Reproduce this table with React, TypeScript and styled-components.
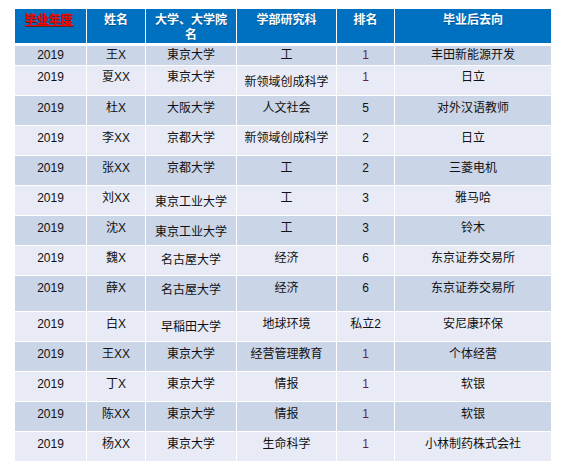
import React from "react";
import styled, { createGlobalStyle } from "styled-components";

const GlobalStyle = createGlobalStyle`
  html, body { margin: 0; padding: 0; background: #ffffff; }
  body {
    font-family: "Liberation Sans Narrow", "Liberation Sans", "Noto Sans CJK SC", sans-serif;
    -webkit-font-smoothing: antialiased;
  }
`;

const COLS = "71px 58px 90px 99px 57px 156px";

const Page = styled.div`
  padding: 9px 0 0 15px;
  width: 536px;
`;

const Table = styled.div`
  display: flex;
  flex-direction: column;
  gap: 1px;
  width: 536px;
`;

const HeaderRow = styled.div`
  display: grid;
  grid-template-columns: ${COLS};
  column-gap: 1px;
  height: 34px;
  margin-bottom: 2px;
`;

const HeadCell = styled.div`
  background: #0070c0;
  color: #ffffff;
  font-family: "Noto Sans CJK SC", sans-serif;
  font-weight: 700;
  font-size: 12px;
  line-height: 15px;
  text-align: center;
  padding: 2px 4px 0;
  text-shadow: 0.5px 0.5px 0.5px rgba(0, 0, 0, 0.25);
`;

const RedTitle = styled.span`
  color: #ff0000;
  text-decoration: underline;
  text-decoration-color: #ff0000;
  text-underline-offset: 1px;
  text-shadow: 1px 1px 0 #4a2a2a;
  margin-right: 4px;
`;

const BodyRow = styled.div<{ $h: number; $band: boolean }>`
  display: grid;
  grid-template-columns: ${COLS};
  column-gap: 1px;
  height: ${(p) => p.$h}px;
  --bg: ${(p) => (p.$band ? "#cbd5e8" : "#e8ebf5")};
`;

const Cell = styled.div<{ $pad: number; $tone?: string }>`
  background: var(--bg);
  color: ${(p) => p.$tone || "#111111"};
  font-size: 12px;
  line-height: 14px;
  text-align: center;
  white-space: nowrap;
  padding-top: ${(p) => p.$pad}px;
`;

type Row = {
  year: string;
  name: string;
  uni: string;
  dept: string;
  rank: string;
  dest: string;
  h: number;
  pad: number;
  uniPad?: number;
  deptPad?: number;
};

const rows: Row[] = [
  { year: "2019", name: "王X", uni: "東京大学", dept: "工", rank: "1", dest: "丰田新能源开发", h: 19, pad: 2 },
  { year: "2019", name: "夏XX", uni: "東京大学", dept: "新领域创成科学", rank: "1", dest: "日立", h: 29, pad: 4, deptPad: 9 },
  { year: "2019", name: "杜X", uni: "大阪大学", dept: "人文社会", rank: "5", dest: "对外汉语教师", h: 29, pad: 5 },
  { year: "2019", name: "李XX", uni: "京都大学", dept: "新领域创成科学", rank: "2", dest: "日立", h: 29, pad: 5 },
  { year: "2019", name: "张XX", uni: "京都大学", dept: "工", rank: "2", dest: "三菱电机", h: 29, pad: 5 },
  { year: "2019", name: "刘XX", uni: "東京工业大学", dept: "工", rank: "3", dest: "雅马哈", h: 29, pad: 5, uniPad: 8.5 },
  { year: "2019", name: "沈X", uni: "東京工业大学", dept: "工", rank: "3", dest: "铃木", h: 29, pad: 5, uniPad: 8.5 },
  { year: "2019", name: "魏X", uni: "名古屋大学", dept: "经济", rank: "6", dest: "东京证券交易所", h: 29, pad: 5, uniPad: 6.5 },
  { year: "2019", name: "薛X", uni: "名古屋大学", dept: "经济", rank: "6", dest: "东京证券交易所", h: 35, pad: 5, uniPad: 7 },
  { year: "2019", name: "白X", uni: "早稲田大学", dept: "地球环境", rank: "私立2", dest: "安尼康环保", h: 29, pad: 5, uniPad: 7.5, deptPad: 4.5 },
  { year: "2019", name: "王XX", uni: "東京大学", dept: "经营管理教育", rank: "1", dest: "个体经营", h: 29, pad: 5 },
  { year: "2019", name: "丁X", uni: "東京大学", dept: "情报", rank: "1", dest: "软银", h: 29, pad: 5 },
  { year: "2019", name: "陈XX", uni: "東京大学", dept: "情报", rank: "1", dest: "软银", h: 29, pad: 5 },
  { year: "2019", name: "杨XX", uni: "東京大学", dept: "生命科学", rank: "1", dest: "小林制药株式会社", h: 29, pad: 5 },
];

export default function App() {
  return (
    <>
      <GlobalStyle />
      <Page>
        <Table>
          <HeaderRow>
            <HeadCell>
              <RedTitle>毕业年度</RedTitle>
            </HeadCell>
            <HeadCell>姓名</HeadCell>
            <HeadCell>大学、大学院名</HeadCell>
            <HeadCell>学部研究科</HeadCell>
            <HeadCell>排名</HeadCell>
            <HeadCell>毕业后去向</HeadCell>
          </HeaderRow>
          {rows.map((r, i) => (
            <BodyRow key={i} $h={r.h} $band={i % 2 === 0}>
              <Cell $pad={r.pad}>{r.year}</Cell>
              <Cell $pad={r.pad}>{r.name}</Cell>
              <Cell $pad={r.uniPad ?? r.pad}>{r.uni}</Cell>
              <Cell $pad={r.deptPad ?? r.pad}>{r.dept}</Cell>
              <Cell $pad={r.pad} $tone={r.rank === "1" ? "#6a1f48" : undefined}>
                {r.rank}
              </Cell>
              <Cell $pad={r.pad}>{r.dest}</Cell>
            </BodyRow>
          ))}
        </Table>
      </Page>
    </>
  );
}
